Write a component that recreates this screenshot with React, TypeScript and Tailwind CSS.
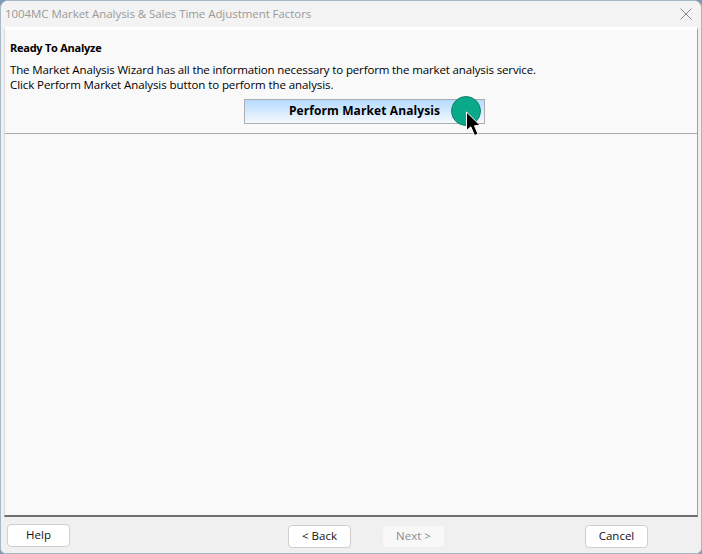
const font = { fontFamily: '"Open Sans", "Noto Sans", sans-serif' };

function FooterButton({ label, disabled }: { label: string; disabled?: boolean }) {
	return (
		<button
			className={
				disabled
					? "w-[63px] h-[23px] rounded-[4px] border border-[#f0f0f0] bg-[#f8f8f8] text-[#8c8c8c] text-[11.5px] leading-none"
					: "w-[63px] h-[23px] rounded-[4px] border border-[#cfcfcf] bg-white text-[#111] text-[11.5px] leading-none"
			}
		>
			{label}
		</button>
	);
}

export default function App() {
	return (
		<div className="w-[702px] h-[554px] bg-[#7f9ab5] overflow-hidden" style={font}>
			<div className="w-full h-full flex flex-col bg-[#f0f0f0] rounded-t-[8px] rounded-b-[6px] border border-[#a9b8c6] overflow-hidden">
				<div className="h-[26px] flex-shrink-0 flex items-center justify-between pl-[4px] pr-[9px] bg-[#f3f3f3]">
					<span className="text-[11.5px] tracking-[-0.06px] text-[#9a9a9a] whitespace-nowrap">
						1004MC Market Analysis &amp; Sales Time Adjustment Factors
					</span>
					<svg width="12" height="12" viewBox="0 0 12 12" fill="none" stroke="#8a8a8a" strokeWidth="1">
						<path d="M0.5 0.5 L11.5 11.5 M11.5 0.5 L0.5 11.5" />
					</svg>
				</div>

				<div className="flex-1 mx-[3px] flex flex-col bg-[#f9f9f9] border-t-[3px] border-t-white border-l border-l-[#d8d8d8] border-r border-r-[#a0a0a0] border-b-2 border-b-[#6e6e6e]">
					<section className="h-[104px] border-b border-[#a8a8a8] pl-[5px] pt-[10px] text-black">
						<h4 className="text-[11px] tracking-[-0.25px] leading-[15px] font-bold">Ready To Analyze</h4>
						<p className="mt-[7px] text-[11.5px] tracking-[-0.135px] leading-[15px] whitespace-nowrap">
							The Market Analysis Wizard has all the information necessary to perform the market analysis service.
							<br />
							<span className="tracking-[-0.085px]">Click Perform Market Analysis button to perform the analysis.</span>
						</p>
						<div className="relative mt-[5px] ml-[234px] w-[241px] h-[25px]">
							<button className="w-full h-full border border-[#aeaeae] bg-gradient-to-b from-[#b5daff] to-[#f5f9fd] text-[12px] tracking-[0.1px] font-bold text-black">
								Perform Market Analysis
							</button>
							<div className="absolute left-[207px] top-[-1px] w-[30px] h-[30px] rounded-full bg-[#0aa98a] border border-[#14806c]" />
							<svg className="absolute left-[221px] top-[14px]" width="16" height="26" viewBox="0 0 16 26">
								<path d="M1.5 1 L1.5 19.5 L5.8 15.8 L9.5 24.5 L13 23 L9.5 14.8 L15 14.3 Z" fill="#000" stroke="#fff" strokeWidth="1" />
							</svg>
						</div>
					</section>
				</div>

				<footer className="h-[36px] flex-shrink-0 flex items-center pl-[6px] bg-[#f0f0f0]">
					<FooterButton label="Help" />
					<div className="ml-[218px]">
						<FooterButton label="< Back" />
					</div>
					<div className="ml-[31px]">
						<FooterButton label="Next >" disabled />
					</div>
					<div className="ml-[140px]">
						<FooterButton label="Cancel" />
					</div>
				</footer>
			</div>
		</div>
	);
}
